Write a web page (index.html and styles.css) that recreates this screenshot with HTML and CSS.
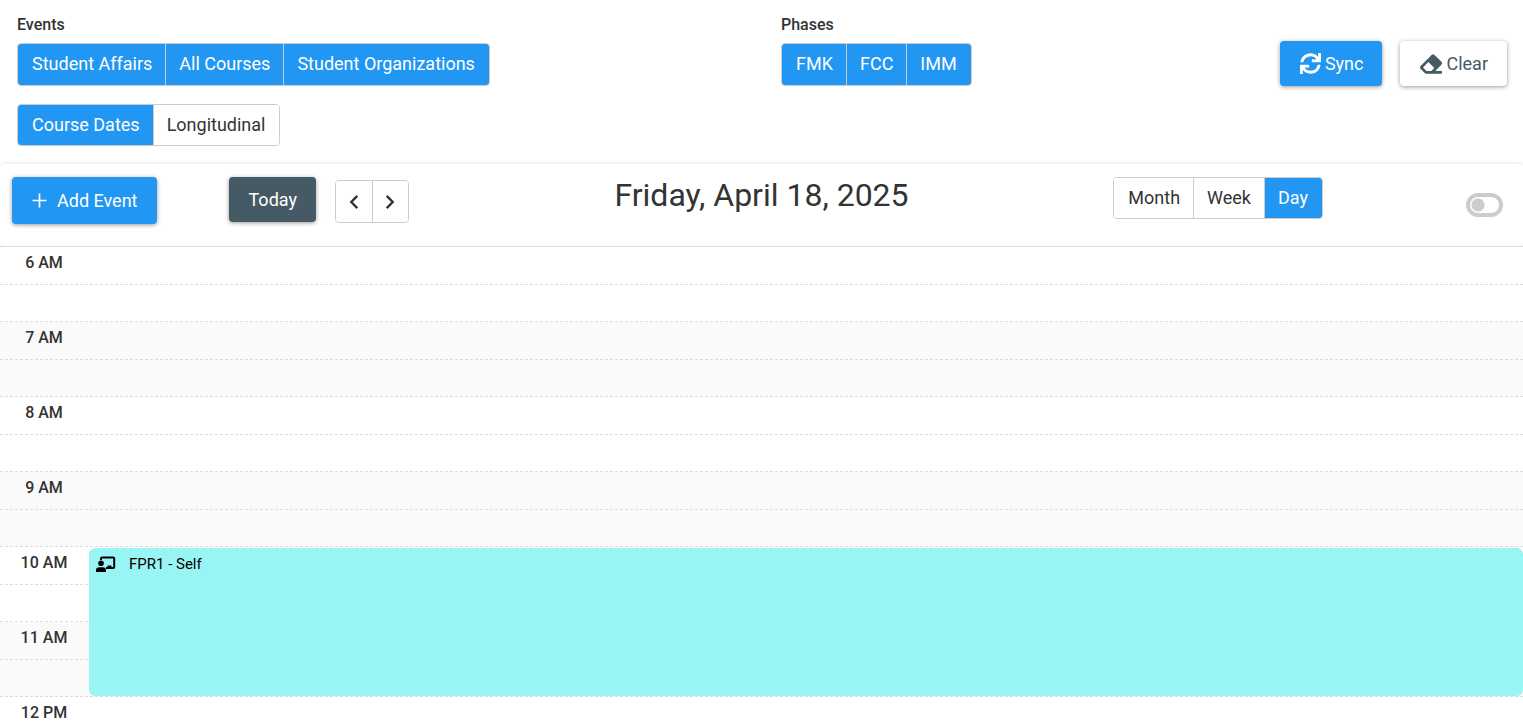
FILE: index.html
```html
<!DOCTYPE html>
<html lang="en">
<head>
  <meta charset="UTF-8">
  <meta name="viewport" content="width=device-width, initial-scale=1.0">
  <title>Calendar</title>
  <link rel="stylesheet" href="styles.css">
</head>
<body>
  <section class="filters">
    <div class="filter-column">
      <h2 class="filter-label">Events</h2>
      <div class="button-group tall" role="group" aria-label="Events">
        <button type="button" class="active">Student Affairs</button>
        <button type="button" class="active">All Courses</button>
        <button type="button" class="active">Student Organizations</button>
      </div>
      <div class="button-group" role="group" aria-label="Course types">
        <button type="button" class="active">Course Dates</button>
        <button type="button">Longitudinal</button>
      </div>
    </div>

    <div class="filter-column phases">
      <div>
        <h2 class="filter-label">Phases</h2>
        <div class="button-group tall" role="group" aria-label="Phases">
          <button type="button" class="active">FMK</button>
          <button type="button" class="active">FCC</button>
          <button type="button" class="active">IMM</button>
        </div>
      </div>
      <div class="filter-actions">
        <button type="button" class="btn btn-primary">
          <svg width="21" height="21" viewBox="0 0 512 512" fill="currentColor" aria-hidden="true"><path d="M440.65 12.57l4 82.77A247.16 247.16 0 0 0 255.83 8C134.73 8 33.91 94.92 12.29 209.82A12 12 0 0 0 24.09 224h49.05a12 12 0 0 0 11.67-9.26 175.91 175.91 0 0 1 317-56.94l-101.46-4.86a12 12 0 0 0-12.57 12v47.41a12 12 0 0 0 12 12H500a12 12 0 0 0 12-12V12a12 12 0 0 0-12-12h-47.37a12 12 0 0 0-11.98 12.57zM255.83 432a175.61 175.61 0 0 1-146-77.8l101.8 4.87a12 12 0 0 0 12.57-12v-47.4a12 12 0 0 0-12-12H12a12 12 0 0 0-12 12V500a12 12 0 0 0 12 12h47.35a12 12 0 0 0 12-12.6l-4.15-82.57A247.17 247.17 0 0 0 255.83 504c121.11 0 221.93-86.92 243.55-201.82a12 12 0 0 0-11.8-14.18h-49.05a12 12 0 0 0-11.67 9.26A175.86 175.86 0 0 1 255.83 432z"/></svg>
          Sync
        </button>
        <button type="button" class="btn btn-light">
          <svg width="22" height="22" viewBox="0 0 512 512" fill="currentColor" aria-hidden="true"><path d="M497.941 273.941c18.745-18.745 18.745-49.137 0-67.882l-160-160c-18.745-18.745-49.136-18.746-67.883 0l-256 256c-18.745 18.745-18.745 49.137 0 67.882l96 96A48.004 48.004 0 0 0 144 480h356c6.627 0 12-5.373 12-12v-40c0-6.627-5.373-12-12-12H355.883l142.058-142.059zm-302.627-62.627l137.373 137.373L265.373 416H150.628l-80-80 124.686-124.686z"/></svg>
          Clear
        </button>
      </div>
    </div>
  </section>

  <header class="toolbar">
    <div class="toolbar-side">
      <button type="button" class="btn btn-primary btn-add">
        <svg width="15" height="15" viewBox="0 0 15 15" stroke="currentColor" stroke-width="1.7" aria-hidden="true"><path d="M7.5 0.5v14M0.5 7.5h14"/></svg>
        Add Event
      </button>
      <button type="button" class="btn btn-dark">Today</button>
      <div class="button-group tall nav">
        <button type="button" aria-label="Previous day">
          <svg width="10" height="16" viewBox="0 0 10 16" fill="none" stroke="currentColor" stroke-width="2.4" aria-hidden="true"><path d="M8.3 1.8L2.3 8l6 6.2"/></svg>
        </button>
        <button type="button" aria-label="Next day">
          <svg width="10" height="16" viewBox="0 0 10 16" fill="none" stroke="currentColor" stroke-width="2.4" aria-hidden="true"><path d="M1.7 1.8l6 6.2-6 6.2"/></svg>
        </button>
      </div>
    </div>
    <h1 class="title">Friday, April 18, 2025</h1>
    <div class="toolbar-side right">
      <div class="button-group" role="group" aria-label="View">
        <button type="button">Month</button>
        <button type="button">Week</button>
        <button type="button" class="active">Day</button>
      </div>
      <input type="checkbox" class="switch" aria-label="Toggle display">
    </div>
  </header>

  <main class="day">
    <div class="hour"><span>6 AM</span></div>
    <div class="hour"><span>7 AM</span></div>
    <div class="hour"><span>8 AM</span></div>
    <div class="hour"><span>9 AM</span></div>
    <div class="hour">
      <span>10 AM</span>
      <a href="#" class="event">
        <svg width="20" height="16" viewBox="0 0 20 16" aria-hidden="true">
          <path d="M5 4V2.500a1 1 0 0 1 1-1h11.200a1 1 0 0 1 1 1v8.500a1 1 0 0 1-1 1H10" fill="none" stroke="#000" stroke-width="2"/>
          <path d="M11.500 9.500h4v2.500h-4z"/>
          <circle cx="5" cy="7.300" r="2.800"/>
          <path d="M0 16v-1.500a3.200 3.200 0 0 1 3.200-3.200h3.600A3.200 3.200 0 0 1 10 14.500V16z"/>
        </svg>
        FPR1 - Self
      </a>
    </div>
    <div class="hour"><span>11 AM</span></div>
    <div class="hour"><span>12 PM</span></div>
  </main>
</body>
</html>
```
FILE: styles.css
```css
:root {
  --primary: #2196f3;
  --dark: #455a64;
  --text: #333333;
  --border: #cccccc;
  --line: #dddddd;
  --event: #99f5f4;
}

* {
  box-sizing: border-box;
  margin: 0;
  padding: 0;
}

html {
  height: 100%;
}

body {
  height: 100%;
  display: flex;
  flex-direction: column;
  font-family: Roboto, 'Helvetica Neue', Arial, sans-serif;
  font-size: 16px;
  color: var(--text);
  background: #ffffff;
}

button {
  font-family: inherit;
  font-size: 18px;
  cursor: pointer;
}

/* Filters */
.filters {
  display: grid;
  grid-template-columns: 1fr 1fr;
  gap: 38px;
  padding: 15px 16px 18px 17px;
}

.filter-label {
  margin-bottom: 8px;
  font-size: 16px;
  line-height: 20px;
  font-weight: 500;
}

.phases {
  display: flex;
  justify-content: space-between;
  align-items: flex-start;
}

.filter-actions {
  display: flex;
  gap: 18px;
  padding-top: 26px;
}

.button-group {
  display: flex;
  width: max-content;
  height: 42px;
  border: 1px solid var(--border);
  border-radius: 4px;
  overflow: hidden;
}

.button-group.tall {
  height: 43px;
}

.button-group + .button-group {
  margin-top: 18px;
}

.button-group button {
  padding: 0 13px 2px;
  border: none;
  background: #ffffff;
  color: var(--text);
}

.button-group button:first-child {
  padding-left: 14px;
}

.button-group button:last-child {
  padding-right: 14px;
}

.button-group button + button {
  border-left: 1px solid var(--border);
}

.button-group button.active {
  background: var(--primary);
  color: #ffffff;
}

.btn {
  display: flex;
  align-items: center;
  gap: 4px;
  height: 45px;
  padding: 0 19px 0 20px;
  border: none;
  border-radius: 4px;
  box-shadow: 0 1px 4px rgba(0, 0, 0, 0.4);
}

.btn-primary {
  background: var(--primary);
  color: #ffffff;
}

.btn-dark {
  background: var(--dark);
  color: #ffffff;
}

.btn-light {
  background: #ffffff;
  color: var(--dark);
}

/* Toolbar */
.toolbar {
  display: flex;
  align-items: flex-start;
  padding: 13px 12px 22px;
  border-radius: 4px;
  background: #ffffff;
  box-shadow: 0 0 4px rgba(0, 0, 0, 0.15);
}

.toolbar-side {
  display: flex;
  flex: 1 1 0;
  align-items: flex-start;
}

.toolbar-side.right {
  justify-content: flex-end;
}

.btn-add {
  gap: 10px;
  height: 47px;
  margin-right: 72px;
}

.nav {
  margin: 3px 0 0 19px;
}

.nav button,
.nav button:first-child,
.nav button:last-child {
  display: flex;
  align-items: center;
  justify-content: center;
  width: 36px;
  padding: 0;
}

.title {
  font-size: 32px;
  line-height: 36px;
  font-weight: 400;
}

.switch {
  appearance: none;
  width: 37px;
  height: 24px;
  margin: 16px 8px 0 143px;
  border: 4px solid var(--border);
  border-radius: 12px;
  background: radial-gradient(circle at 8px 8px, var(--border) 6px, transparent 7px);
  cursor: pointer;
}

.switch:checked {
  border-color: var(--primary);
  background: radial-gradient(circle at 21px 8px, var(--primary) 6px, transparent 7px);
}

/* Day view */
.day {
  flex: 1;
  min-height: 0;
  overflow-y: auto;
  scrollbar-width: none;
  border-top: 1px solid var(--line);
  background: #ffffff;
}

.hour {
  position: relative;
  display: grid;
  grid-template-rows: 38px 37px;
  grid-template-columns: 88px 1fr;
}

.hour:nth-child(even) {
  background: #fafafa;
}

/* half hour and full hour lines */
.hour::before,
.hour::after {
  content: '';
  grid-column: 1 / -1;
  border-bottom: 1px dashed var(--line);
}

.hour::before {
  grid-row: 1;
}

.hour::after {
  grid-row: 2;
}

.hour span {
  grid-row: 1;
  grid-column: 1;
  padding-top: 6px;
  line-height: 20px;
  font-weight: 500;
  text-align: center;
}

.event {
  position: absolute;
  z-index: 1;
  top: 1px;
  left: 89px;
  right: 0;
  height: 148px;
  display: flex;
  align-items: flex-start;
  gap: 13px;
  padding: 8px 7px;
  border-radius: 6px;
  background: var(--event);
  color: #000000;
  font-size: 15px;
  line-height: 16px;
  text-decoration: none;
}
```
